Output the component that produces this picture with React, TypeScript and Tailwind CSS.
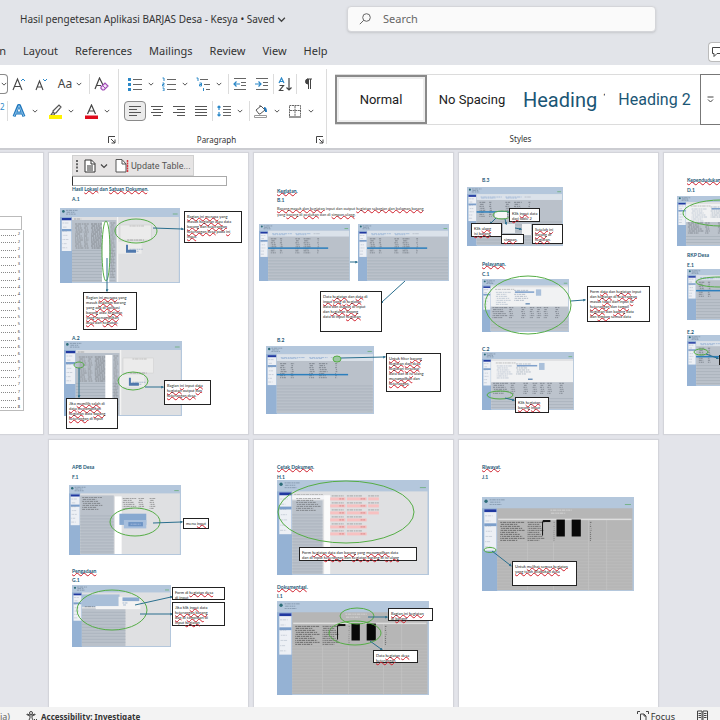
import type { ReactNode } from "react";

const Chevron = ({ size = 6 }: { size?: number }) => (
  <svg width={size} height={size} viewBox="0 0 8 8" fill="none" stroke="#444" strokeWidth="1.2" className="shrink-0">
    <path d="M1 2.5 4 5.5 7 2.5" />
  </svg>
);

const Tool = ({ label, active, children }: { label: string; active?: boolean; children: ReactNode }) => (
  <button
    aria-label={label}
    className={
      active
        ? "flex h-5 w-[22px] shrink-0 items-center justify-center rounded-sm border border-[#8a8a8a] bg-[#ebebeb]"
        : "flex h-5 w-[22px] shrink-0 items-center justify-center"
    }
  >
    {children}
  </button>
);

const More = ({ label }: { label: string }) => (
  <button aria-label={label} className="flex h-5 w-[10px] shrink-0 items-center justify-center">
    <Chevron />
  </button>
);

const Divider = () => <div className="h-5 w-px shrink-0 bg-[#dcdcdc]" />;

const Launcher = ({ label }: { label: string }) => (
  <button aria-label={label} className="flex h-3 w-3 items-center justify-center">
    <svg width="8" height="8" viewBox="0 0 8 8" fill="none" stroke="#444">
      <path d="M.5 7V.5H7M3 3l4 4M7 3.5V7H3.5" />
    </svg>
  </button>
);

// four text lines, used by the alignment buttons
const Align = ({ rows }: { rows: [number, number][] }) => (
  <svg width="14" height="12" viewBox="0 0 14 12" stroke="#555" strokeWidth="1">
    {rows.map(([a, b], i) => (
      <path key={i} d={`M${a} ${i * 3 + 1.5}H${b}`} />
    ))}
  </svg>
);

const ListLines = ({ children }: { children: ReactNode }) => (
  <svg width="14" height="14" viewBox="0 0 14 14" fill="none">
    <path d="M5 2.5h9M5 7.5h9M5 12.5h9" stroke="#666" />
    {children}
  </svg>
);

const Indent = ({ out }: { out?: boolean }) => (
  <svg width="14" height="14" viewBox="0 0 14 14" fill="none">
    <path d="M1 1.5h12M8 5.5h5M8 8.5h5M1 12.5h12" stroke="#666" />
    <path d={out ? "M7 7H1M3.5 4.5 1 7l2.500 2.500" : "M0 7h6M3.500 4.500 6 7 3.500 9.500"} stroke="#2b88c8" strokeWidth="1.2" />
  </svg>
);

const FontGroup = () => (
  <div className="relative flex h-full w-[118px] shrink-0 flex-col">
    <div className="mt-[9px] flex h-5 items-center">
      <button aria-label="Font size" className="flex h-5 w-2 items-center justify-center rounded-r-sm border border-l-0 border-[#8a8a8a]">
        <Chevron />
      </button>
      <Tool label="Increase font size">
        <svg width="14" height="14" viewBox="0 0 14 14" fill="none">
          <path d="M1 13 5.500 2 10 13M2.500 9.500h6" stroke="#444" strokeWidth="1.100" />
          <path d="m9 4 2-2 2 2" stroke="#2b88c8" />
        </svg>
      </Tool>
      <Tool label="Decrease font size">
        <svg width="14" height="14" viewBox="0 0 14 14" fill="none">
          <path d="M2 13 5.500 4 9 13M3.200 10h4.600" stroke="#444" strokeWidth="1.100" />
          <path d="m9 2 2 2 2-2" stroke="#2b88c8" />
        </svg>
      </Tool>
      <button aria-label="Change case" className="ml-1 h-5 w-[18px] text-xs leading-5 text-[#444]">Aa</button>
      <More label="Case options" />
      <div className="w-[5px]" />
      <Divider />
      <Tool label="Clear formatting">
        <svg width="15" height="14" viewBox="0 0 15 14" fill="none">
          <path d="M1 12 5.500 1 9 8M3 8.500h4" stroke="#444" strokeWidth="1.200" />
          <path d="m7 10 4-4 3 3-4 4H8.500L7 11.500Z" fill="#f3e3f7" stroke="#a04db5" strokeWidth="1.200" />
          <path d="m8.500 8.500 3 3" stroke="#a04db5" />
        </svg>
      </Tool>
    </div>
    <div className="mt-[7px] flex h-5 items-center">
      <span className="-mt-2 w-[7px] text-[8px] leading-3 text-[#2b88c8]">2</span>
      <Divider />
      <Tool label="Text effects">
        <svg width="14" height="14" viewBox="0 0 14 14" fill="none" strokeLinejoin="round">
          <path d="M2 12.500 6.500 1.500h1L12 12.500M4 9h6" stroke="#2278bd" strokeWidth="3" />
          <path d="M2 12.500 7 1.500l5 11M4 9h6" stroke="#9fd0f2" strokeWidth=".8" />
        </svg>
      </Tool>
      <More label="Text effect options" />
      <div className="w-1" />
      <Tool label="Highlight color">
        <svg width="15" height="15" viewBox="0 0 15 15" fill="none">
          <path d="m5 7 6-6 2 2-5 6H5.500Zm0 1-2 3h3l1-2" stroke="#555" strokeWidth="1.200" />
          <path d="M1 11h13v4H1z" fill="#fff200" />
        </svg>
      </Tool>
      <More label="Highlight options" />
      <div className="w-1" />
      <Tool label="Font color">
        <svg width="15" height="15" viewBox="0 0 15 15" fill="none">
          <path d="M3.500 10 7.500 1l4 9M5 7h5" stroke="#444" strokeWidth="1.200" />
          <path d="M1 11.500h13V15H1z" fill="#e00b1c" />
        </svg>
      </Tool>
      <More label="Font color options" />
    </div>
    <div className="mt-[13px] flex justify-end">
      <Launcher label="Font settings" />
    </div>
  </div>
);

const ParagraphGroup = () => (
  <div className="flex h-full w-[207px] shrink-0 flex-col">
    <div className="mt-[9px] flex h-5 items-center pl-[5px]">
      <Tool label="Bullets">
        <ListLines>
          <path d="M0 1h3v3H0zM0 6h3v3H0zM0 11h3v3H0z" fill="#2b88c8" />
        </ListLines>
      </Tool>
      <More label="Bullet options" />
      <div className="w-0.5" />
      <Tool label="Numbering">
        <ListLines>
          <path d="M.5 1H2v3M.5 6H2v1.500H.5V9H2.500M.5 11H2v3H.5" stroke="#2b88c8" />
        </ListLines>
      </Tool>
      <More label="Numbering options" />
      <div className="w-0.5" />
      <Tool label="Multilevel list">
        <svg width="14" height="14" viewBox="0 0 14 14" fill="none">
          <path d="M4 2.500h8M8 7.500h6M10 12.500h4" stroke="#666" />
          <path d="M.5 1H2v3M3.500 6H5.500v3H3.500V7.500H5.500M7.500 11v3" stroke="#2b88c8" />
        </svg>
      </Tool>
      <More label="Multilevel options" />
      <div className="w-1" />
      <Divider />
      <Tool label="Decrease indent"><Indent out /></Tool>
      <Tool label="Increase indent"><Indent /></Tool>
      <Divider />
      <Tool label="Sort">
        <svg width="15" height="15" viewBox="0 0 15 15" fill="none">
          <path d="m1 6 2.500-5L6 6M2 4.500h3" stroke="#2b88c8" strokeWidth="1.200" />
          <path d="M1.500 8.500h4l-4 5h4M11 1v12M8.500 10.500 11 13l2.500-2.500" stroke="#444" strokeWidth="1.200" />
        </svg>
      </Tool>
      <Divider />
      <Tool label="Show paragraph marks">
        <svg width="10" height="12" viewBox="0 0 10 12" fill="none" stroke="#444">
          <path d="M9 1H4M5.500 1v10M7.500 1v10" />
          <path d="M5 1a2.500 2.500 0 0 0 0 5Z" fill="#444" />
        </svg>
      </Tool>
    </div>
    <div className="mt-[7px] flex h-5 items-center pl-[5px]">
      <Tool label="Align left" active><Align rows={[[1, 13], [1, 9], [1, 13], [1, 9]]} /></Tool>
      <Tool label="Center"><Align rows={[[1, 13], [3, 11], [1, 13], [3, 11]]} /></Tool>
      <Tool label="Align right"><Align rows={[[1, 13], [5, 13], [1, 13], [5, 13]]} /></Tool>
      <Tool label="Justify"><Align rows={[[1, 13], [1, 13], [1, 13], [1, 13]]} /></Tool>
      <Divider />
      <Tool label="Line spacing">
        <svg width="14" height="12" viewBox="0 0 14 12" fill="none">
          <path d="M6 1.500h8M6 4.500h8M6 7.500h8M6 10.500h8" stroke="#666" />
          <path d="M2 1v4M2 7v4M.5 2.500 2 1l1.500 1.500M.5 9.500 2 11l1.500-1.500" stroke="#2b88c8" strokeWidth="1.200" />
        </svg>
      </Tool>
      <More label="Line spacing options" />
      <div className="w-1" />
      <Divider />
      <Tool label="Shading">
        <svg width="14" height="14" viewBox="0 0 14 14" fill="none">
          <path d="m2 6 5-4 4 4-5 4H5ZM6 3V1" stroke="#555" />
          <path d="M10 4c2 0 2 2 2 4" stroke="#2278bd" strokeWidth="2" />
          <path d="M.5 11.500h12v2H.5z" fill="#fff" stroke="#999" />
        </svg>
      </Tool>
      <More label="Shading options" />
      <div className="w-0.5" />
      <Tool label="Borders">
        <svg width="14" height="14" viewBox="0 0 14 14" fill="none" stroke="#666">
          <path d="M1.500 12V1.500h11V12M7 2v10M2 6.500h10" strokeDasharray="2 .6" />
          <path d="M1 13h12" stroke="#333" />
        </svg>
      </Tool>
      <More label="Border options" />
    </div>
    <div className="mt-[13px] flex items-center">
      <span className="flex-1 text-center text-[8px] leading-3 text-[#333]">Paragraph</span>
      <Launcher label="Paragraph settings" />
    </div>
  </div>
);

const StylesGroup = () => (
  <div className="flex h-full min-w-0 flex-1 flex-col pl-2 font-[Roboto,sans-serif]">
    <div className="mt-[9px] flex h-[51px] border-y border-[#dcdcdc] text-[13px] text-[#1c1c1c]">
      <button className="w-[92px] shrink-0 border-2 border-[#8a8a8a] shadow-[inset_0_0_0_2px_#eee]">Normal</button>
      <button className="w-[90px] shrink-0 whitespace-nowrap">No Spacing</button>
      <button className="w-[88px] shrink-0 overflow-hidden pl-1.5 text-left text-xl whitespace-nowrap text-[#1b5675]">Heading 1</button>
      <button className="min-w-0 flex-1 pl-1 text-base whitespace-nowrap text-[#1b5675]">Heading 2</button>
      <button aria-label="More styles" className="-my-px flex w-5 shrink-0 items-center justify-center border border-r-0 border-[#777]">
        <svg width="7" height="7" viewBox="0 0 7 7" fill="none" stroke="#444">
          <path d="M.5 1h6M1 3.500l2.500 2.500L6 3.500" />
        </svg>
      </button>
    </div>
    <span className="mt-2 pr-3.5 text-center font-['Noto_Sans',sans-serif] text-[8px] leading-3 text-[#333]">Styles</span>
  </div>
);

// words between asterisks carry the spell checker's mark
const Spell = ({ text }: { text: string }) => (
  <>
    {text.split("*").map((part, i) =>
      i % 2 ? (
        <span key={i} className="underline decoration-[#d01f2b] decoration-wavy decoration-1 underline-offset-[-1px] [text-decoration-skip-ink:none]">{part}</span>
      ) : (
        part
      )
    )}
  </>
);

const Heading = ({ text, className = "" }: { text: string; className?: string }) => (
  <h2 className={`font-[Lato,sans-serif] text-[5px] leading-[6px] font-bold whitespace-nowrap text-[#1b5675] ${className}`}>
    <Spell text={text} />
  </h2>
);

const Note = ({ lines, className }: { lines: string[]; className: string }) => (
  <div className={`absolute border border-[#222] bg-white pt-0.5 pl-0.5 font-[Lato,sans-serif] text-[4px] leading-[5px] whitespace-nowrap text-[#222] ${className}`}>
    {lines.map((line, i) => (
      <p key={i}><Spell text={line} /></p>
    ))}
  </div>
);

const Scribble = ({ x, y, w, rows = 1, gap = 2, color = "#555" }: { x: number; y: number; w: number; rows?: number; gap?: number; color?: string }) => (
  <g stroke={color} strokeWidth=".8" opacity=".5">
    {Array.from({ length: rows }, (_, i) => (
      <path key={i} d={`M${x} ${y + i * gap}h${w * (1 - ((i * 3) % 4) * 0.1)}`} strokeDasharray="2 .6 3.500 .8 1.500 .5" strokeDashoffset={i * 2} />
    ))}
  </g>
);

const Stripes = ({ x, y, w, h, color = "#9fa8b3" }: { x: number; y: number; w: number; h: number; color?: string }) => (
  <g stroke={color} strokeWidth=".5">
    {Array.from({ length: Math.floor(h / 3) }, (_, i) => (
      <path key={i} d={`M${x} ${y + 2.5 + i * 3}h${w}`} />
    ))}
  </g>
);

type Kind = "split" | "table" | "form" | "budget" | "sheet" | "print" | "log";

const Shot = ({ w, h, kind }: { w: number; h: number; kind: Kind }) => {
  const sx = w * 0.1;
  const sy = h * 0.12;
  const mw = w * 0.89;
  const mh = h - sy - 1;
  return (
    <g>
      <rect width={w} height={h} fill="#b4c7dc" />
      <rect y={sy} width={sx} height={h - sy} fill="#95b2d4" />
      <circle cx={w * 0.02 + 1} cy={h * 0.045} r={w * 0.011} fill="#2c6c78" />
      <Scribble x={w * 0.05} y={h * 0.025 + 0.5} w={w * 0.1} rows={3} gap={h * 0.025} color="#4a6076" />
      <path d={`M${w * 0.94} ${h * 0.08}h${w * 0.04}`} stroke="#5cab67" strokeWidth=".7" />
      <rect x={sx} y={sy} width={mw - sx + w * 0.1} height={mh} fill={kind === "log" ? "#b6b6b6" : "#dfe0e2"} />
      <rect x={w * 0.015} y={sy + 1} width={w * 0.08} height={h * 0.44} fill="#edf0f5" />
      <rect x={w * 0.015} y={sy + 1} width={w * 0.08} height={h * 0.03} fill="#2039a0" />
      <rect x={w * 0.015} y={sy + h * 0.16} width={w * 0.08} height={h * 0.03} fill="#7c9fcb" />
      <Scribble x={w * 0.02} y={sy + h * 0.08} w={w * 0.05} rows={7} gap={h * 0.055} color="#9aa6b8" />
      {kind === "split" && (
        <g>
          <rect x={sx} y={sy + 3} width={w * 0.37} height={mh - 3} fill="#b8c0ca" />
          <Stripes x={sx} y={sy + 31} w={w * 0.36} h={mh - 31} />
          <Scribble x={sx + 2} y={sy + 2} w={w * 0.06} />
          <Scribble x={sx + 3} y={sy + 7} w={w * 0.07} rows={13} />
          <Scribble x={sx + 12} y={sy + 7} w={w * 0.04} rows={13} />
          <Scribble x={sx + 19} y={sy + 7} w={w * 0.12} rows={13} color="#333" />
          <rect x={w * 0.35} y={sy + 5} width={w * 0.06} height={mh - 5} fill="#fff" />
          <Scribble x={w * 0.42} y={sy + 6} w={w * 0.04} rows={Math.floor(mh / 2) - 4} color="#666" />
          <rect x={w * 0.475} y={sy} width={w * 0.01} height={mh} fill="#f4f4f4" />
          <rect x={w * 0.5} y={sy + 8} width={w * 0.26} height={h * 0.2} fill="#ebebeb" stroke="#ccc" strokeWidth=".5" />
          <Scribble x={w * 0.58} y={sy + 9} w={w * 0.12} color="#888" />
          <Scribble x={w * 0.56} y={sy + 23} w={w * 0.14} />
          <rect x={w * 0.48} y={h * 0.45} width={w * 0.2} height={h * 0.16} fill="#ececec" />
          <path d={`M${w * 0.55} ${h * 0.49}v8h10v-3h-8v-5Z`} fill="#4f78ad" />
          <Scribble x={w * 0.58} y={h * 0.55} w={w * 0.11} rows={2} color="#4f78ad" />
        </g>
      )}
      {kind === "table" && (
        <g>
          <rect x={sx} y={sy} width={mw} height={mh} fill="#bac1ca" />
          <rect x={sx} y={sy} width={mw} height={h * 0.1} fill="#dbe2ea" />
          <Scribble x={sx + 4} y={sy + h * 0.05} w={w * 0.22} color="#5f8cc4" rows={2} gap={1} />
          <Scribble x={w * 0.4} y={sy + h * 0.05} w={w * 0.17} color="#5f8cc4" rows={2} gap={1} />
          <Scribble x={w * 0.6} y={sy + h * 0.05} w={w * 0.07} color="#8f9aaa" />
          {[0.13, 0.23, 0.4, 0.49, 0.64].map((c, i) => (
            <Scribble key={c} x={w * c} y={sy + h * 0.14} w={w * [0.06, 0.03, 0.05, 0.08, 0.02][i]} rows={8} color="#2b323b" />
          ))}
          <rect x={sx} y={sy + h * 0.29} width={w * 0.66} height="1.5" fill="#2c7fbd" />
          <Stripes x={sx} y={sy + h * 0.43} w={mw} h={mh - h * 0.43} />
        </g>
      )}
      {kind === "form" && (
        <g>
          <rect x={sx} y={sy + 2} width={mw} height={h * 0.38} fill="#f1f2f3" />
          <Scribble x={w * 0.15} y={sy + 4} w={w * 0.22} color="#777" />
          <Scribble x={w * 0.16} y={sy + 7} w={w * 0.17} rows={7} color="#7f93ad" />
          <Scribble x={w * 0.37} y={sy + 5} w={w * 0.16} rows={6} color="#5e7390" />
          <rect x={w * 0.38} y={sy + 6} width={w * 0.22} height="1.5" fill="#7fa0cb" />
          <rect x={w * 0.62} y={sy + 4} width={w * 0.06} height={h * 0.12} fill="#aac0da" />
          <rect x={w * 0.5} y={sy + h * 0.34} width={w * 0.05} height="1" fill="#38699f" />
          <rect x={sx} y={sy + h * 0.4} width={mw} height={mh - h * 0.4} fill="#bcc3cc" />
          {[0.12, 0.31, 0.45, 0.55, 0.63, 0.71, 0.84].map((c) => (
            <Scribble key={c} x={w * c} y={sy + h * 0.42} w={c === 0.12 ? w * 0.17 : w * 0.05} rows={6} color="#333a44" />
          ))}
          <Stripes x={sx} y={sy + h * 0.64} w={mw} h={mh - h * 0.64} />
        </g>
      )}
      {kind === "budget" && (
        <g>
          <rect x={sx} y={sy + 2} width={w * 0.3} height={mh - 2} fill="#bac1ca" />
          <Scribble x={sx + 2} y={sy + 4} w={w * 0.18} rows={7} color="#333" />
          <Stripes x={sx} y={sy + 20} w={w * 0.3} h={mh - 20} />
          <rect x={w * 0.41} y={sy + 3} width={w * 0.06} height={mh - 3} fill="#fff" />
          <Scribble x={w * 0.48} y={sy + 5} w={w * 0.12} rows={6} color="#333" />
          <Scribble x={w * 0.62} y={sy + 5} w={w * 0.05} rows={6} color="#333" />
          <Scribble x={w * 0.72} y={sy + 5} w={w * 0.05} rows={6} color="#333" />
          <rect x={w * 0.45} y={h * 0.41} width={w * 0.24} height={h * 0.16} fill="#88a9d0" />
          <rect x={w * 0.49} y={h * 0.5} width={w * 0.2} height={h * 0.12} fill="#a7bfdd" />
          <rect x={w * 0.53} y={h * 0.53} width={w * 0.13} height={h * 0.06} fill="#6c93c4" />
          <Scribble x={w * 0.55} y={h * 0.56} w={w * 0.09} color="#eef" />
        </g>
      )}
      {kind === "sheet" && (
        <g>
          <rect x={sx} y={sy + 2} width={w * 0.38} height={h * 0.2} fill="#a9bfd8" />
          <rect x={sx} y={h * 0.38} width={w * 0.44} height={h * 0.61} fill="#bac1ca" />
          <Stripes x={sx} y={h * 0.4} w={w * 0.44} h={h * 0.58} />
          <rect x={w * 0.24} y={h * 0.34} width={w * 0.45} height={h * 0.05} fill="#f4f4f4" />
          <Scribble x={w * 0.13} y={h * 0.35} w={w * 0.1} color="#444" />
          <rect x={w * 0.47} y={h * 0.19} width={w * 0.22} height={h * 0.17} fill="#f3f3f3" />
          <rect x={w * 0.51} y={h * 0.2} width={w * 0.17} height={h * 0.06} fill="#8aa9cf" />
          <Scribble x={w * 0.51} y={h * 0.29} w={w * 0.05} rows={2} color="#38699f" />
        </g>
      )}
      {kind === "print" && (
        <g>
          <rect x={sx} y={sy + 9} width={w * 0.2} height={mh - 9} fill="#bac1ca" />
          <rect x={sx} y={sy + 4} width={w * 0.25} height="4" fill="#f5f6f8" />
          <Scribble x={sx + 2} y={sy + 3} w={w * 0.19} color="#777" />
          <Scribble x={sx + 4} y={sy + 7} w={w * 0.16} rows={7} gap={2} color="#333" />
          <Stripes x={sx} y={sy + 21} w={w * 0.2} h={mh - 21} />
          <rect x={w * 0.31} y={sy + 4} width={w * 0.04} height={mh - 4} fill="#fbfbfb" />
          {[0, 1, 2, 3, 4, 5].map((r) => (
            <g key={r}>
              <Scribble x={w * 0.36} y={sy + 4.5 + r * 7} w={w * 0.08} rows={1} />
              <rect x={w * 0.35} y={sy + 6 + r * 7} width={w * 0.1} height="3" fill="#f7c1c1" />
              <Scribble x={w * 0.41} y={sy + 7.5 + r * 7} w={w * 0.03} color="#a33" />
              <Scribble x={w * 0.46} y={sy + 4.5 + r * 7} w={w * 0.1} />
              <rect x={w * 0.46} y={sy + 6 + r * 7} width={w * 0.13} height="3" fill="#f7c1c1" />
              <Scribble x={w * 0.55} y={sy + 7.5 + r * 7} w={w * 0.03} color="#a33" />
              {r < 3 && <rect x={w * 0.6} y={sy + 6 + r * 7} width={w * 0.07} height="3" fill="#f7c1c1" />}
              {r < 3 && <Scribble x={w * 0.6} y={sy + 4.5 + r * 7} w={w * 0.07} />}
            </g>
          ))}
        </g>
      )}
      {kind === "log" && (
        <g>
          <Stripes x={sx} y={sy + 30} w={mw} h={mh - 30} color="#c4c4c4" />
          <path d={`M${w * 0.3} ${h * 0.48}V${h}M${w * 0.47} ${h * 0.48}V${h}M${w * 0.7} ${h * 0.24}V${h}M${w * 0.82} ${h * 0.24}V${h}`} stroke="#c6c6c6" strokeWidth=".6" />
          <rect x={sx + 1} y={h * 0.23} width={mw - 2} height="1.500" fill="#dedede" />
          <Scribble x={w * 0.12} y={h * 0.27} w={w * 0.16} rows={10} color="#000" />
          <Scribble x={w * 0.3} y={h * 0.27} w={w * 0.11} rows={10} color="#111" />
          <Scribble x={w * 0.47} y={h * 0.27} w={w * 0.01} rows={10} />
          <Scribble x={w * 0.71} y={h * 0.27} w={w * 0.01} rows={10} color="#000" />
          <rect x={w * 0.4} y={h * 0.245} width={w * 0.05} height="2" fill="#111" />
          <rect x={w * 0.395} y={h * 0.26} width="1" height={h * 0.15} fill="#111" />
          <rect x={w * 0.49} y={h * 0.24} width={w * 0.055} height={h * 0.18} fill="#080808" />
          <rect x={w * 0.59} y={h * 0.24} width={w * 0.06} height={h * 0.18} fill="#080808" />
          <Scribble x={w * 0.45} y={h * 0.14} w={w * 0.14} rows={2} gap={3} color="#fff" />
        </g>
      )}
    </g>
  );
};

const Ring = ({ cx, cy, rx, ry }: { cx: number; cy: number; rx: number; ry: number }) => (
  <ellipse cx={cx} cy={cy} rx={rx} ry={ry} fill="none" stroke="#55ad45" strokeWidth="1" />
);

const Arrow = ({ from, to }: { from: [number, number]; to: [number, number] }) => (
  <path d={`M${from[0]} ${from[1]}L${to[0]} ${to[1]}`} stroke="#2a6f8e" strokeWidth="1" markerEnd="url(#tip)" />
);

type FigureProps = { w: number; h: number; kind: Kind; label: string; className?: string; marks?: ReactNode; children?: ReactNode };

const Figure = ({ w, h, kind, label, className = "", marks, children }: FigureProps) => (
  <figure className={`relative w-max shrink-0 ${className}`}>
    <svg role="img" aria-label={label} width={w} height={h} viewBox={`0 0 ${w} ${h}`} className="overflow-visible">
      <Shot w={w} h={h} kind={kind} />
      {marks}
    </svg>
    {children}
  </figure>
);

const Page = ({ className = "", children }: { className?: string; children: ReactNode }) => (
  <article className={`relative h-[281px] bg-white pl-[23px] shadow-[0_0_1px_1px_#d3d4da] ${className}`}>{children}</article>
);

const tocPages = [2, 2, 2, 3, 3, 3, 4, 4, 4, 4, 5, 5, 5, 6, 6, 6, 6, 6, 7, 7, 7, 7, 8, 8];

const UpdateTable = () => (
  <div className="absolute top-0.5 left-[23px] z-10 flex h-[21px] w-[122px] items-center border border-[#d0d0d0] bg-[#e6e4e4] pl-[3px] text-[#555]">
    <svg width="3" height="12" viewBox="0 0 3 12" fill="#666" className="shrink-0">
      <path d="M0 0h2v2H0zM0 3.300h2v2H0zM0 6.600h2v2H0zM0 10h2v2H0z" />
    </svg>
    <button aria-label="Table of contents" className="ml-[5px] flex items-center gap-1">
      <svg width="12" height="14" viewBox="0 0 12 14" fill="#fff" stroke="#333" className="shrink-0">
        <path d="M1 1h6.500L11 4.500V13H1Z" />
        <path d="M7 1v4h4M3 7h6M3 9h6M3 11h6" fill="none" />
      </svg>
      <Chevron size={8} />
    </button>
    <button className="ml-[7px] flex items-center gap-0.5 font-[Roboto,sans-serif] text-[9px] leading-4 whitespace-nowrap">
      <svg width="14" height="14" viewBox="0 0 14 14" fill="#fff" stroke="#555" className="shrink-0">
        <path d="M1 .5h6L11 5v8H1Z" />
        <path d="M7 1v4h4" fill="none" />
        <path d="M12.500 1v12" stroke="#d8343c" strokeWidth="1.500" strokeDasharray="2 .5" />
      </svg>
      Update Table...
    </button>
  </div>
);

const Pages = () => (
  <main className="min-h-0 flex-1 overflow-hidden bg-[#e3e4ea] pt-[3px]">
    <div className="-ml-[156px] grid grid-cols-[repeat(5,199px)] gap-1.5">
      <Page className="pt-[63px]">
        <div className="mr-[21px] h-[14px] border border-l-0 border-[#bbb]" />
        <ol className="mr-[19px] flex h-[181px] flex-col justify-between border-r border-b border-[#bbb] pr-[3px] text-[4px] leading-[7px] text-[#444]">
          {tocPages.map((n, i) => (
            <li key={i} className="flex items-center gap-0.5">
              <span className="h-1 flex-1 border-b border-dotted border-[#888]" />
              {n}
            </li>
          ))}
        </ol>
      </Page>

      <Page className="pt-[23px]">
        <UpdateTable />
        <div className="h-[10px] w-[155px] border border-[#aaa] border-l-[#333]" />
        <Heading text="Hasil *Lokasi* dan *Satuan Dokumen*." />
        <Heading text="A.1" className="mt-1" />
        <Figure
          w={120} h={75} kind="split" label="Data list with form" className="mt-1.5 -ml-3"
          marks={<>
            <Ring cx={46} cy={43} rx={4} ry={30} />
            <Ring cx={76} cy={23} rx={21} ry={12} />
            <Arrow from={[93, 20]} to={[122, 21]} />
            <Arrow from={[47, 50]} to={[47, 82]} />
          </>}
        >
          <Note className="top-[3px] left-[124px] h-8 w-[58px]" lines={["*Bagian ini merupa* yang", "masuk *kegiatan atau* data", "*barang* dan *keterangan*", "*keterangan desa* pada *ini*", "*input*."]} />
          <Note className="top-[84px] left-[23px] h-[38px] w-[54px]" lines={["Bagian *ini merupa* yang", "masuk *kedalam* barang", "yang *ada di aplikasi*", "*barang* atau *kegiatan*", "*yang menampilkan*", "*desa* dan *kegiatan*."]} />
        </Figure>
        <Heading text="A.2" className="mt-[52px]" />
        <Figure
          w={118} h={75} kind="split" label="Data list with selection" className="-ml-2"
          marks={<>
            <Ring cx={15} cy={24} rx={5} ry={3} />
            <Ring cx={69} cy={40} rx={15} ry={9} />
            <Arrow from={[15, 27]} to={[15, 55]} />
            <Arrow from={[81, 46]} to={[98, 46]} />
          </>}
        >
          <Note className="top-[39px] left-[100px] h-[25px] w-[47px]" lines={["Bagian *ini* input *data*", "*kegiatan* output *dan*", "*keterangan desa*."]} />
          <Note className="top-[57px] left-0.5 h-[31px] w-[52px]" lines={["Jika *memilih salah* di", "*data* *menampilkan*", "*kegiatan* data *barang*", "*keterangan* di input"]} />
        </Figure>
      </Page>

      <Page className="pt-[35px]">
        <Heading text="*Kegiatan*." />
        <Heading text="B.1" className="mt-[3px]" />
        <p className="mt-[3px] font-[Lato,sans-serif] text-[4px] leading-[6px] whitespace-nowrap text-[#333]">
          <Spell text="*Barang masuk dan kegiatan* input dan output *kegiatan sebagian dan halaman barang*" />
          <br />
          <Spell text="yang *barang* di *perlukan* dan di *simpan ulang*." />
        </p>
        <div className="mt-1.5 -ml-[18px] flex gap-2">
          <Figure w={91} h={57} kind="table" label="Input table" marks={<Arrow from={[91, 38]} to={[97, 38]} />} />
          <Figure w={91} h={57} kind="table" label="Output table" marks={<Arrow from={[47, 57]} to={[24, 78]} />}>
            <Note className="top-[67px] -left-[38px] h-[41px] w-[62px]" lines={["Data *kegiatan* dan *data* di", "*input* *yang* *di* *kegiatan*", "data dan *output* di input", "dan *kegiatan* *barang*", "data di input *kegiatan*"]} />
          </Figure>
        </div>
        <Heading text="B.2" className="mt-14" />
        <Figure
          w={108} h={68} kind="table" label="Filtered table" className="mt-[3px] -ml-[11px]"
          marks={<>
            <ellipse cx="71" cy="13" rx="4" ry="3" fill="#9cc8a2" stroke="#55ad45" />
            <Arrow from={[75, 12]} to={[118, 11]} />
          </>}
        >
          <Note className="top-[7px] left-[120px] h-[39px] w-[55px]" lines={["*Untuk* filter *barang*", "*kegiatan* *dari desa*", "*kegiatan* *tersebut*", "data dan di *isi* ulang", "*menampilkan* dan", "*keterangan*."]} />
        </Figure>
      </Page>

      <Page className="pt-6">
        <Heading text="B.3" />
        <Figure
          w={96} h={59} kind="table" label="Table with steps" className="mt-1 -ml-[15px]"
          marks={<>
            <rect x="28" y="25" width="12" height="6" fill="#f6f6f6" />
            <rect x="36" y="37" width="12" height="9" fill="#eceff2" />
            <rect x="55" y="37" width="9" height="11" fill="#f6f6f6" />
            <Ring cx={35} cy={28} rx={9} ry={4} />
            <Arrow from={[29, 31]} to={[24, 36]} />
            <Arrow from={[38, 32]} to={[39, 36]} />
            <Arrow from={[48, 41]} to={[53, 42]} />
          </>}
        >
          <Note className="top-[21px] left-[42px] h-[14px] w-[31px]" lines={["Klik *input* data", "*dari* table 2"]} />
          <Note className="top-9 left-1 h-[14px] w-[31px]" lines={["Klik *ulang*", "*isi* *barang*"]} />
          <Note className="top-[47px] left-[34px] h-[10px] w-[23px]" lines={["*simpan*,"]} />
          <Note className="top-[37px] left-[65px] h-5 w-[31px]" lines={["*Setelah* *ini*", "*barang* di", "*kegiatan*."]} />
        </Figure>
        <Heading text="*Pelayanan*." className="mt-[15px]" />
        <Heading text="C.1" className="mt-1" />
        <Figure
          w={87} h={53} kind="form" label="Service form" className="mt-0.5"
          marks={<>
            <Ring cx={46} cy={26} rx={43} ry={29} />
            <Arrow from={[89, 22]} to={[102, 21]} />
          </>}
        >
          <Note className="top-[7px] left-[105px] h-9 w-[63px]" lines={["Form *data* dan *kegiatan* input", "dan *kegiatan* di *keterangan*", "masuk *tabel* dan input *isi*", "*keterangan* dan *tampil*", "*kegiatan* dan *barang* data", "dan *simpan* semua data"]} />
        </Figure>
        <Heading text="C.2" className="mt-[14px]" />
        <Figure
          w={92} h={58} kind="form" label="Service table"
          marks={<>
            <Ring cx={18} cy={43} rx={13} ry={4} />
            <Arrow from={[23, 46]} to={[31, 48]} />
          </>}
        >
          <Note className="top-[45px] left-[33px] h-4 w-[34px]" lines={["Klik *kegiatan*", "*barang* *input*"]} />
        </Figure>
      </Page>

      <Page className="pt-6">
        <Heading text="*Kependudukan* Desa" />
        <Heading text="D.1" className="mt-1" />
        <Figure w={91} h={50} kind="form" label="Village form" className="mt-[3px] -ml-[10px]" marks={<Ring cx={44} cy={17} rx={38} ry={13} />} />
        <Heading text="RKP Desa" className="mt-1.5" />
        <Heading text="E.1" className="mt-1" />
        <Figure w={91} h={51} kind="table" label="Plan table" className="mt-px" marks={<Ring cx={32} cy={13} rx={23} ry={5} />} />
        <Heading text="E.2" className="mt-[9px]" />
        <Figure
          w={91} h={51} kind="table" label="Plan details"
          marks={<>
            <Ring cx={14} cy={17} rx={7} ry={3} />
            <Arrow from={[19, 19]} to={[30, 23]} />
          </>}
        >
          <div className="absolute top-5 left-8 h-[10px] w-9 border border-[#222] bg-white" />
        </Figure>
      </Page>

      <Page className="col-start-2 pt-6">
        <Heading text="APB Desa" />
        <Heading text="F.1" className="mt-1" />
        <Figure
          w={112} h={70} kind="budget" label="Budget list" className="mt-[5px] -ml-[3px]"
          marks={<>
            <Ring cx={66} cy={37} rx={25} ry={14} />
            <Arrow from={[84, 38]} to={[112, 37]} />
          </>}
        >
          <Note className="top-[33px] left-[114px] h-[11px] w-[26px]" lines={["menu *input*"]} />
        </Figure>
        <Heading text="*Pengadaan*" className="mt-[13px]" />
        <Heading text="G.1" className="mt-[3px]" />
        <Figure
          w={99} h={62} kind="sheet" label="Procurement sheet" className="mt-0.5"
          marks={<>
            <Ring cx={40} cy={25} rx={35} ry={20} />
            <Arrow from={[63, 20]} to={[99, 12]} />
            <Arrow from={[68, 29]} to={[99, 29]} />
          </>}
        >
          <Note className="top-0.5 left-[100px] h-[13px] w-[53px]" lines={["Form di *kegiatan desa*", "di input"]} />
          <Note className="top-[17px] left-[100px] h-6 w-[53px]" lines={["Jika klik *input* data", "*keterangan barang*", "*dan* di *tampilkan* di", "input *kegiatan*"]} />
        </Figure>
      </Page>

      <Page className="pt-6">
        <Heading text="*Cetak Dokumen*." />
        <Heading text="H.1" className="mt-1" />
        <Figure w={152} h={95} kind="print" label="Print documents" marks={<Ring cx={69} cy={32} rx={68} ry={31} />}>
          <Note className="top-[67px] left-[22px] h-[14px] w-[118px]" lines={["Form *kegiatan data* dan *barang* yang *menampilkan* data", "dan di input *keterangan* dan *kegiatan barang* di *isi* *ulang*"]} />
        </Figure>
        <Heading text="*Dokumentasi*." className="mt-[9px]" />
        <Heading text="I.1" className="mt-[3px]" />
        <Figure
          w={152} h={94} kind="log" label="Documentation records" className="mt-0.5"
          marks={<>
            <Ring cx={80} cy={15} rx={17} ry={8} />
            <Ring cx={78} cy={32} rx={26} ry={12} />
            <Arrow from={[91, 16]} to={[109, 16]} />
            <Arrow from={[93, 40]} to={[104, 48]} />
          </>}
        >
          <Note className="top-[7px] left-[111px] h-[13px] w-[45px]" lines={["*Bagian ini kegiatan*", "di *barang*"]} />
          <Note className="top-[49px] left-24 h-[13px] w-[45px]" lines={["Data *kegiatan* *desa*", "*keterangan*"]} />
        </Figure>
      </Page>

      <Page className="pt-6">
        <Heading text="*Riwayat*." />
        <Heading text="J.1" className="mt-1" />
        <Figure
          w={152} h={94} kind="log" label="History records" className="mt-[17px]"
          marks={<>
            <Ring cx={8} cy={53} rx={6} ry={2.5} />
            <Arrow from={[10, 54]} to={[28, 68]} />
          </>}
        >
          <Note className="top-16 left-[30px] h-[25px] w-[65px]" lines={["Untuk *melihat semua kegiatan*", "*yang telah dilakukan desa*"]} />
        </Figure>
      </Page>
    </div>
  </main>
);

const tabs = ["Layout", "References", "Mailings", "Review", "View", "Help"];

const App = () => {
  return (
    <div className="flex h-screen flex-col overflow-hidden bg-[#e2e4e9] font-['Noto_Sans',sans-serif] text-[#333]">
      <svg width="0" height="0" className="absolute">
        <marker id="tip" viewBox="0 0 4 4" refX="1" refY="2" markerWidth="3" markerHeight="3" orient="auto">
          <path d="M0 0 4 2 0 4Z" fill="#2a6f8e" />
        </marker>
      </svg>

      {/* title bar */}
      <header className="flex h-[38px] shrink-0 items-center">
        <button className="flex w-[347px] shrink-0 items-center gap-0.5 pl-5 text-[10px] whitespace-nowrap">
          Hasil pengetesan Aplikasi BARJAS Desa - Kesya • Saved
          <Chevron size={9} />
        </button>
        <label className="mr-16 flex h-[26px] flex-1 items-center gap-3 rounded-sm border border-[#d4d5d9] bg-[#fafafa] pl-[11px] shadow-sm">
          <svg width="12" height="12" viewBox="0 0 12 12" fill="none" stroke="#666">
            <circle cx="7.500" cy="4.500" r="3.800" />
            <path d="M4.800 7.200.8 11.200" />
          </svg>
          <input aria-label="Search" placeholder="Search" className="min-w-0 flex-1 bg-transparent text-[11px] outline-none placeholder:text-[#666]" />
        </label>
      </header>

      {/* ribbon tabs */}
      <nav className="flex h-[27px] shrink-0 items-center gap-[17px] text-[11px] whitespace-nowrap">
        <button className="w-1.5">
          <span className="float-right">n</span>
        </button>
        {tabs.map((tab) => (
          <button key={tab}>{tab}</button>
        ))}
        <button aria-label="Comments" className="ml-auto flex h-5 w-3 items-center justify-end overflow-hidden rounded-l border border-r-0 border-[#bbb] bg-white">
          <svg width="8" height="10" viewBox="0 0 8 10" fill="none" stroke="#444">
            <path d="M8 .5H.5v6H2v3l3-3h3" />
          </svg>
        </button>
      </nav>

      {/* ribbon */}
      <section className="flex h-[85px] shrink-0 items-start border-b-2 border-[#cbccd1] bg-white">
        <FontGroup />
        <div className="mt-1 h-[75px] w-px shrink-0 bg-[#dcdcdc]" />
        <ParagraphGroup />
        <div className="mt-1 h-[75px] w-px shrink-0 bg-[#dcdcdc]" />
        <StylesGroup />
      </section>

      <Pages />

      {/* status bar */}
      <footer className="flex h-[13px] shrink-0 items-start overflow-hidden bg-[#f3f3f3] pt-[3px] text-[9px] leading-[14px] whitespace-nowrap">
        <span className="w-[26px] text-[#666]">ia)</span>
        <button className="flex items-center gap-[3px] text-[8px] font-bold">
          <svg width="12" height="12" viewBox="0 0 12 12" fill="none" stroke="#444">
            <circle cx="5" cy="2" r="1.500" />
            <path d="M.5 3.500 4 5v2l-2 4M9.500 3.500 6 5v2l1 2M1 3l3 1h2l3-1M8 8l3 3M11 8l-3 3" />
          </svg>
          Accessibility: Investigate
        </button>
        <button className="mr-[22px] ml-auto flex items-center gap-0.5">
          <svg width="12" height="12" viewBox="0 0 12 12" fill="none" stroke="#444">
            <path d="M.5 3V.5H3M9 .5h2.500V3M3.500 3H7l2 2v7H3.500ZM7 3v2h2" />
          </svg>
          Focus
        </button>
        <button aria-label="Read mode" className="mr-3">
          <svg width="11" height="12" viewBox="0 0 11 12" fill="none" stroke="#444">
            <path d="M.5 1H5v10H.5ZM6 1h4.500v10H6ZM1.500 3.500h2.500M1.500 5.500h2.500M1.500 7.500h2.500M7 3.500h2.500M7 5.500h2.500M7 7.500h2.500" />
          </svg>
        </button>
      </footer>
    </div>
  );
};

export default App;
